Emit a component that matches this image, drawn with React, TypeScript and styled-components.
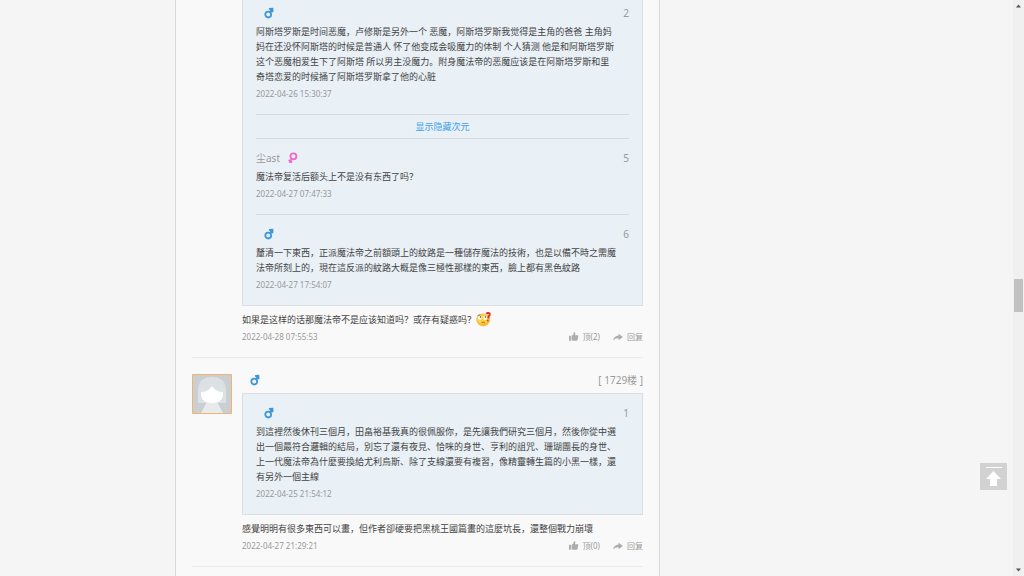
import React from "react";
import styled, { createGlobalStyle } from "styled-components";

const GlobalStyle = createGlobalStyle`
  * { box-sizing: border-box; }
  body {
    margin: 0;
    background: #f5f5f5;
    color: #444;
    font-family: "Noto Sans", "Noto Sans CJK SC", sans-serif;
    font-size: 9px;
    line-height: 15px;
  }
  p { margin: 0; }
`;

const Page = styled.div`
  display: flex;
  min-height: 100vh;
`;

const Content = styled.div`
  flex: 1;
  padding: 0 175px;
`;

const Column = styled.main`
  max-width: 485px;
  min-height: 100%;
  padding: 0 16px;
  background: #f9f9f9;
  border: solid #d9d9d9;
  border-width: 0 1px;
`;

const Comment = styled.article<{ $continued?: boolean }>`
  display: grid;
  grid-template-columns: 40px minmax(0, 1fr);
  gap: 10px;
  padding: ${(p) => (p.$continued ? 0 : 16)}px 0 14px;
  border-bottom: 1px solid #ebebeb;
`;

const Avatar = styled.svg`
  display: block;
  width: 40px;
  height: 40px;
`;

const Header = styled.header`
  display: flex;
  align-items: center;
  justify-content: space-between;
  height: 12px;
  margin-bottom: 7px;
  color: #999;
  font-size: 10px;
`;

const Author = styled.span`
  display: flex;
  align-items: center;
  gap: 8px;
`;

const Quotes = styled.div<{ $continued?: boolean }>`
  padding: 0 13px;
  background: #e9f0f6;
  border: 1px solid #d9dfe3;
  border-top-width: ${(p) => (p.$continued ? 0 : 1)}px;
`;

const Quote = styled.section<{ $continued?: boolean }>`
  padding: ${(p) => (p.$continued ? 6 : 12)}px 0 14px;

  & + & {
    border-top: 1px solid #d6dbdf;
  }
`;

const QuoteHeader = styled(Header)`
  height: 14px;
  margin-bottom: 4px;
`;

const Message = styled.p`
  margin-bottom: 4px;
  white-space: pre;
`;

const Reply = styled(Message)`
  display: flex;
  margin-top: 6px;
`;

const Time = styled.time`
  display: block;
  color: #999;
  font-size: 8px;
  line-height: 12px;
`;

const Reveal = styled.div`
  display: flex;
  align-items: center;
  justify-content: center;
  height: 25px;
  border: solid #d6dbdf;
  border-width: 1px 0;
`;

const RevealLink = styled.a`
  color: #3f9fe8;
  text-decoration: none;
`;

const Footer = styled.footer`
  display: flex;
  align-items: center;
  justify-content: space-between;
  height: 12px;
`;

const Actions = styled.div`
  display: flex;
  gap: 13px;
`;

const Action = styled.button`
  display: flex;
  align-items: center;
  gap: 4px;
  padding: 0;
  border: 0;
  background: none;
  color: #999;
  font-family: inherit;
  font-size: 8px;
  line-height: 12px;
  cursor: pointer;
`;

const ToTop = styled.button`
  position: fixed;
  right: 17px;
  bottom: 86px;
  width: 27px;
  height: 27px;
  padding: 0;
  border: 0;
  background: #d2d2d2;
  cursor: pointer;

  svg { display: block; }
`;

const ScrollRail = styled.div`
  position: sticky;
  top: 0;
  display: flex;
  flex-direction: column;
  align-items: center;
  width: 11px;
  height: 100vh;
  padding: 4px 0;
  background: #f0f0f0;
`;

const Thumb = styled.div`
  width: 9px;
  height: 33px;
  background: #c1c1c1;
`;

const Space = styled.div<{ $grow: number }>`
  flex: ${(p) => p.$grow};
`;

const Male = () => (
  <svg width="11" height="12" viewBox="0 0 11 12" aria-label="男">
    <circle cx="4.2" cy="7.6" r="2.9" fill="none" stroke="#3b97dc" strokeWidth="1.8" />
    <path d="M6 5.7 7.8 3.6" stroke="#3b97dc" strokeWidth="1.8" />
    <path d="M4.6 1.9 5.4 1 9.2.8 9.5 4.6 8.6 5.4 6.6 3.9Z" fill="#3b97dc" />
  </svg>
);

const Female = () => (
  <svg width="10" height="12" viewBox="0 0 10 12" aria-label="女">
    <circle cx="5.4" cy="4.3" r="3" fill="none" stroke="#f265d0" strokeWidth="1.8" />
    <path d="M3.7 6.6 1.6 10.8M.6 7.9 4.3 10.2" stroke="#f265d0" strokeWidth="1.8" />
  </svg>
);

const LikeIcon = () => (
  <svg width="10" height="10" viewBox="0 0 9 9" fill="#adadad" aria-hidden="true">
    <path d="M0 3.4h1.7v4.4H0zM2.3 3.5 4 2.1 4.3.2Q5.6-.2 5.700 1.3L5.4 2.9H8Q8.700 3.2 8.3 4.100L7.700 7.1Q7.5 7.8 6.8 7.8H3.3L2.3 7.3Z" />
  </svg>
);

const ReplyIcon = () => (
  <svg width="10" height="9" viewBox="0 0 10 9" fill="#adadad" aria-hidden="true">
    <path d="M5.6.8 9.9 4.1 5.6 7.2V5.3Q2.2 5 .3 7.4.8 3 5.6 2.6Z" />
  </svg>
);

const Emoji = () => (
  <svg width="15" height="15" viewBox="0 0 15 15" aria-label="疑惑">
    <ellipse cx="7.2" cy="7.9" rx="6.8" ry="6.3" fill="#f9b92d" />
    <ellipse cx="7" cy="7" rx="6" ry="5" fill="#fdd045" />
    <circle cx="4" cy="5.8" r="2" fill="#fff" />
    <circle cx="9.2" cy="5.8" r="2" fill="#fff" />
    <circle cx="4.5" cy="5" r=".8" fill="#5b3a1d" />
    <circle cx="9.4" cy="5" r=".8" fill="#5b3a1d" />
    <path d="M1.5 3.700 4.4 2.6M5.7 10.5Q7.3 9.8 8.9 10.8" fill="none" stroke="#8b551c" strokeWidth=".8" />
    <path d="M10.3 1.8Q12 .3 13.500 1.400 14.200 3 12.800 4.300L12.1 6.400" fill="none" stroke="#dc3227" strokeWidth="1.9" />
    <circle cx="11.7" cy="8.400" r=".9" fill="#dc3227" />
  </svg>
);

const QuoteItem = (p: {
  name?: string;
  female?: boolean;
  floor: number;
  text: string;
  time: string;
  continued?: boolean;
}) => (
  <Quote $continued={p.continued}>
    <QuoteHeader>
      <Author>
        <span>{p.name}</span>
        {p.female ? <Female /> : <Male />}
      </Author>
      <span>{p.floor}</span>
    </QuoteHeader>
    <Message>{p.text}</Message>
    <Time>{p.time}</Time>
  </Quote>
);

const CommentFooter = ({ time, likes }: { time: string; likes: number }) => (
  <Footer>
    <Time>{time}</Time>
    <Actions>
      <Action type="button"><LikeIcon />顶({likes})</Action>
      <Action type="button"><ReplyIcon />回复</Action>
    </Actions>
  </Footer>
);

export default function App() {
  return (
    <Page>
      <GlobalStyle />
      <Content>
        <Column>
          <Comment $continued>
            <div />
            <div>
              <Quotes $continued>
                <QuoteItem
                  continued
                  floor={2}
                  time="2022-04-26 15:30:37"
                  text={`阿斯塔罗斯是时间恶魔，卢修斯是另外一个 恶魔，阿斯塔罗斯我觉得是主角的爸爸 主角妈
妈在还没怀阿斯塔的时候是普通人 怀了他变成会吸魔力的体制 个人猜测 他是和阿斯塔罗斯
这个恶魔相爱生下了阿斯塔 所以男主没魔力。附身魔法帝的恶魔应该是在阿斯塔罗斯和里
奇塔恋爱的时候捅了阿斯塔罗斯拿了他的心脏`}
                />
                <Reveal><RevealLink href="#hidden">显示隐藏次元</RevealLink></Reveal>
                <QuoteItem name="尘ast" female floor={5} time="2022-04-27 07:47:33" text="魔法帝复活后额头上不是没有东西了吗？" />
                <QuoteItem
                  floor={6}
                  time="2022-04-27 17:54:07"
                  text={`釐清一下東西，正派魔法帝之前額頭上的紋路是一種儲存魔法的技術，也是以備不時之需魔
法帝所刻上的，現在這反派的紋路大概是像三極性那樣的東西，臉上都有黑色紋路`}
                />
              </Quotes>
              <Reply>如果是这样的话那魔法帝不是应该知道吗？或存有疑惑吗？<Emoji /></Reply>
              <CommentFooter time="2022-04-28 07:55:53" likes={2} />
            </div>
          </Comment>

          <Comment>
            <Avatar viewBox="0 0 40 40" role="img" aria-label="头像">
              <path d="M.5.5H39.5V39.5H.5Z" fill="#c9cfd2" />
              <path d="M6 29V17Q6 3 20 3T34 17V29Z" fill="#dce2e4" />
              <path d="M16 26 9 39H31L24 26Z" fill="#e7ebec" />
              <path d="M9 18Q16 18 20 12 24 18 31 18 32 29 20 29 8 29 9 18Z" fill="#fff" />
              <path d="M.5.5H39.5V39.5H.5Z" fill="none" stroke="#f2b56f" />
            </Avatar>
            <div>
              <Header>
                <Author><span /><Male /></Author>
                <span>[ 1729楼 ]</span>
              </Header>
              <Quotes>
                <QuoteItem
                  floor={1}
                  time="2022-04-25 21:54:12"
                  text={`到這裡然後休刊三個月，田畠裕基我真的很佩服你，是先讓我們研究三個月，然後你從中選
出一個最符合邏輯的結局，別忘了還有夜見、恰咪的身世、亨利的詛咒、珊瑚團長的身世、
上一代魔法帝為什麼要換給尤利烏斯、除了支線還要有複習，像精靈轉生篇的小黑一樣，還
有另外一個主線`}
                />
              </Quotes>
              <Reply>感覺明明有很多東西可以畫，但作者卻硬要把黑桃王國篇畫的這麼坑長，還整個戰力崩壞</Reply>
              <CommentFooter time="2022-04-27 21:29:21" likes={0} />
            </div>
          </Comment>
        </Column>
      </Content>

      <ScrollRail aria-hidden="true">
        <svg width="5" height="4" viewBox="0 0 5 4"><path d="M0 3.5 2.5.5 5 3.5Z" fill="#555" /></svg>
        <Space $grow={271} />
        <Thumb />
        <Space $grow={256} />
        <svg width="5" height="4" viewBox="0 0 5 4"><path d="M0 .5 2.5 3.5 5 .5Z" fill="#555" /></svg>
      </ScrollRail>

      <ToTop type="button" aria-label="返回顶部">
        <svg width="27" height="27" viewBox="0 0 27 27" fill="#fff">
          <path d="M6 4h16v1H6zM13.5 8 21 16h-4v7h-7v-7H6Z" />
        </svg>
      </ToTop>
    </Page>
  );
}
